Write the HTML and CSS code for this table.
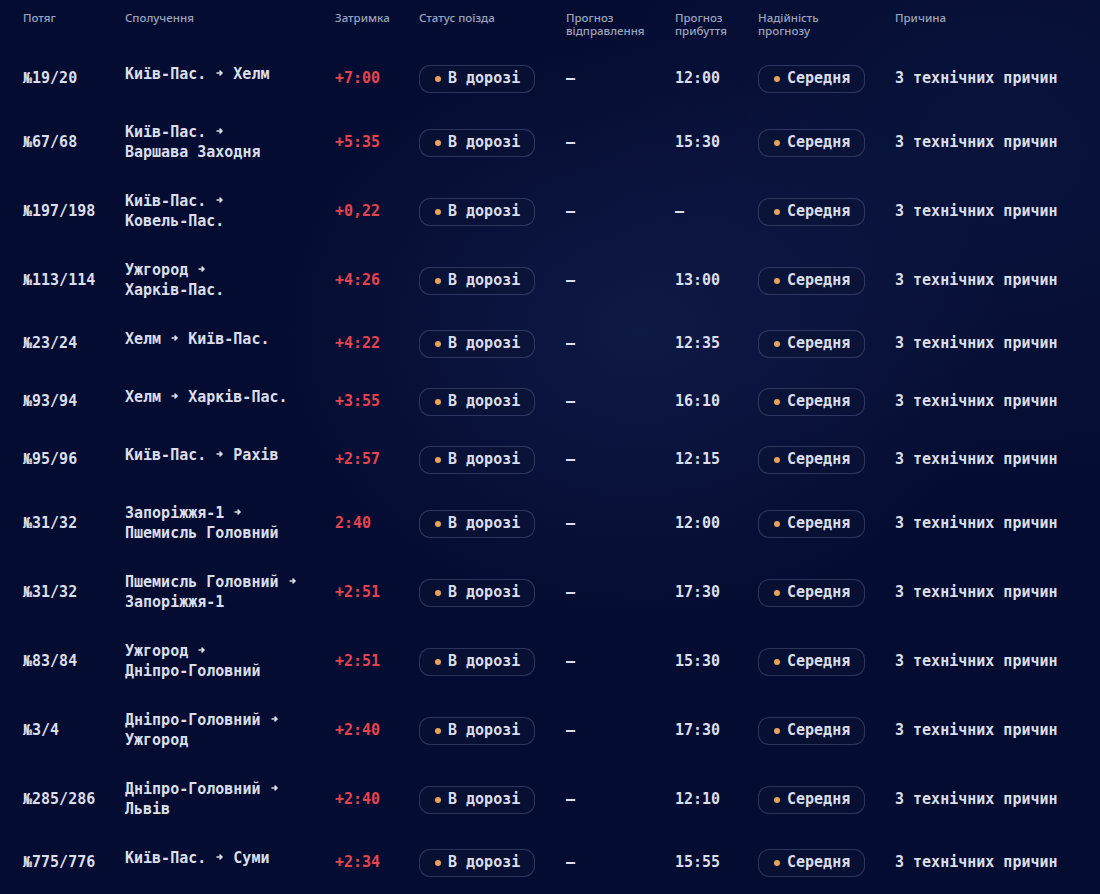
FILE: index.html
```html
<!DOCTYPE html>
<html lang="uk">
<head>
<meta charset="utf-8">
<title>Затримки поїздів</title>
<link rel="stylesheet" href="styles.css">
</head>
<body>
<div class="board">
  <div class="row head">
    <div>Потяг</div>
    <div>Сполучення</div>
    <div>Затримка</div>
    <div>Статус поїзда</div>
    <div>Прогноз<br>відправлення</div>
    <div>Прогноз<br>прибуття</div>
    <div>Надійність<br>прогнозу</div>
    <div>Причина</div>
  </div>

  <div class="row"><div class="num">№19/20</div><div class="route">Київ-Пас. <span class="arr"><svg viewBox="0 0 9 10" width="9" height="10"><path d="M1.5 5h5M4.5 2.6 7 5 4.5 7.4" fill="none" stroke="currentColor" stroke-width="1.5"/></svg></span> Хелм</div><div class="delay">+7:00</div><div><span class="pill"><i class="dot"></i>В дорозі</span></div><div>—</div><div>12:00</div><div><span class="pill"><i class="dot"></i>Середня</span></div><div>З технічних причин</div></div>

  <div class="row"><div class="num">№67/68</div><div class="route">Київ-Пас. <span class="arr"><svg viewBox="0 0 9 10" width="9" height="10"><path d="M1.5 5h5M4.5 2.6 7 5 4.5 7.4" fill="none" stroke="currentColor" stroke-width="1.5"/></svg></span><br>Варшава Заходня</div><div class="delay">+5:35</div><div><span class="pill"><i class="dot"></i>В дорозі</span></div><div>—</div><div>15:30</div><div><span class="pill"><i class="dot"></i>Середня</span></div><div>З технічних причин</div></div>

  <div class="row"><div class="num">№197/198</div><div class="route">Київ-Пас. <span class="arr"><svg viewBox="0 0 9 10" width="9" height="10"><path d="M1.5 5h5M4.5 2.6 7 5 4.5 7.4" fill="none" stroke="currentColor" stroke-width="1.5"/></svg></span><br>Ковель-Пас.</div><div class="delay">+0,22</div><div><span class="pill"><i class="dot"></i>В дорозі</span></div><div>—</div><div>—</div><div><span class="pill"><i class="dot"></i>Середня</span></div><div>З технічних причин</div></div>

  <div class="row"><div class="num">№113/114</div><div class="route">Ужгород <span class="arr"><svg viewBox="0 0 9 10" width="9" height="10"><path d="M1.5 5h5M4.5 2.6 7 5 4.5 7.4" fill="none" stroke="currentColor" stroke-width="1.5"/></svg></span><br>Харків-Пас.</div><div class="delay">+4:26</div><div><span class="pill"><i class="dot"></i>В дорозі</span></div><div>—</div><div>13:00</div><div><span class="pill"><i class="dot"></i>Середня</span></div><div>З технічних причин</div></div>

  <div class="row"><div class="num">№23/24</div><div class="route">Хелм <span class="arr"><svg viewBox="0 0 9 10" width="9" height="10"><path d="M1.5 5h5M4.5 2.6 7 5 4.5 7.4" fill="none" stroke="currentColor" stroke-width="1.5"/></svg></span> Київ-Пас.</div><div class="delay">+4:22</div><div><span class="pill"><i class="dot"></i>В дорозі</span></div><div>—</div><div>12:35</div><div><span class="pill"><i class="dot"></i>Середня</span></div><div>З технічних причин</div></div>

  <div class="row"><div class="num">№93/94</div><div class="route">Хелм <span class="arr"><svg viewBox="0 0 9 10" width="9" height="10"><path d="M1.5 5h5M4.5 2.6 7 5 4.5 7.4" fill="none" stroke="currentColor" stroke-width="1.5"/></svg></span> Харків-Пас.</div><div class="delay">+3:55</div><div><span class="pill"><i class="dot"></i>В дорозі</span></div><div>—</div><div>16:10</div><div><span class="pill"><i class="dot"></i>Середня</span></div><div>З технічних причин</div></div>

  <div class="row"><div class="num">№95/96</div><div class="route">Київ-Пас. <span class="arr"><svg viewBox="0 0 9 10" width="9" height="10"><path d="M1.5 5h5M4.5 2.6 7 5 4.5 7.4" fill="none" stroke="currentColor" stroke-width="1.5"/></svg></span> Рахів</div><div class="delay">+2:57</div><div><span class="pill"><i class="dot"></i>В дорозі</span></div><div>—</div><div>12:15</div><div><span class="pill"><i class="dot"></i>Середня</span></div><div>З технічних причин</div></div>

  <div class="row"><div class="num">№31/32</div><div class="route">Запоріжжя-1 <span class="arr"><svg viewBox="0 0 9 10" width="9" height="10"><path d="M1.5 5h5M4.5 2.6 7 5 4.5 7.4" fill="none" stroke="currentColor" stroke-width="1.5"/></svg></span><br>Пшемисль Головний</div><div class="delay">2:40</div><div><span class="pill"><i class="dot"></i>В дорозі</span></div><div>—</div><div>12:00</div><div><span class="pill"><i class="dot"></i>Середня</span></div><div>З технічних причин</div></div>

  <div class="row"><div class="num">№31/32</div><div class="route">Пшемисль Головний <span class="arr"><svg viewBox="0 0 9 10" width="9" height="10"><path d="M1.5 5h5M4.5 2.6 7 5 4.5 7.4" fill="none" stroke="currentColor" stroke-width="1.5"/></svg></span><br>Запоріжжя-1</div><div class="delay">+2:51</div><div><span class="pill"><i class="dot"></i>В дорозі</span></div><div>—</div><div>17:30</div><div><span class="pill"><i class="dot"></i>Середня</span></div><div>З технічних причин</div></div>

  <div class="row"><div class="num">№83/84</div><div class="route">Ужгород <span class="arr"><svg viewBox="0 0 9 10" width="9" height="10"><path d="M1.5 5h5M4.5 2.6 7 5 4.5 7.4" fill="none" stroke="currentColor" stroke-width="1.5"/></svg></span><br>Дніпро-Головний</div><div class="delay">+2:51</div><div><span class="pill"><i class="dot"></i>В дорозі</span></div><div>—</div><div>15:30</div><div><span class="pill"><i class="dot"></i>Середня</span></div><div>З технічних причин</div></div>

  <div class="row"><div class="num">№3/4</div><div class="route">Дніпро-Головний <span class="arr"><svg viewBox="0 0 9 10" width="9" height="10"><path d="M1.5 5h5M4.5 2.6 7 5 4.5 7.4" fill="none" stroke="currentColor" stroke-width="1.5"/></svg></span><br>Ужгород</div><div class="delay">+2:40</div><div><span class="pill"><i class="dot"></i>В дорозі</span></div><div>—</div><div>17:30</div><div><span class="pill"><i class="dot"></i>Середня</span></div><div>З технічних причин</div></div>

  <div class="row"><div class="num">№285/286</div><div class="route">Дніпро-Головний <span class="arr"><svg viewBox="0 0 9 10" width="9" height="10"><path d="M1.5 5h5M4.5 2.6 7 5 4.5 7.4" fill="none" stroke="currentColor" stroke-width="1.5"/></svg></span><br>Львів</div><div class="delay">+2:40</div><div><span class="pill"><i class="dot"></i>В дорозі</span></div><div>—</div><div>12:10</div><div><span class="pill"><i class="dot"></i>Середня</span></div><div>З технічних причин</div></div>

  <div class="row"><div class="num">№775/776</div><div class="route">Київ-Пас. <span class="arr"><svg viewBox="0 0 9 10" width="9" height="10"><path d="M1.5 5h5M4.5 2.6 7 5 4.5 7.4" fill="none" stroke="currentColor" stroke-width="1.5"/></svg></span> Суми</div><div class="delay">+2:34</div><div><span class="pill"><i class="dot"></i>В дорозі</span></div><div>—</div><div>15:55</div><div><span class="pill"><i class="dot"></i>Середня</span></div><div>З технічних причин</div></div>
</div>
</body>
</html>
```

FILE: styles.css
```css
html, body {
  margin: 0;
  padding: 0;
  height: 100%;
}

body {
  background-color: #040c31;
  background-image:
    radial-gradient(ellipse 520px 420px at 640px 330px, rgba(28, 40, 92, 0.45), rgba(28, 40, 92, 0) 70%),
    radial-gradient(ellipse 600px 500px at 1000px 150px, rgba(20, 32, 80, 0.35), rgba(20, 32, 80, 0) 70%);
  color: #dadeeb;
  font-family: "DejaVu Sans Mono", "Liberation Mono", monospace;
  font-size: 15px;
  overflow: hidden;
}

.board {
  padding: 2px 0 0 23px;
}

.row {
  display: grid;
  grid-template-columns: 102px 210px 84px 147px 109px 83px 137px 1fr;
  align-items: center;
  padding: 15px 0;
  line-height: 19.5px;
  font-weight: bold;
  white-space: nowrap;
}

.row.head {
  align-items: start;
  padding: 9px 0 13px;
  font-family: "Noto Sans", "Open Sans", sans-serif;
  font-size: 11.5px;
  line-height: 13px;
  font-weight: 500;
  color: #9ca4bd;
}

.route {
  align-self: start;
}

.arr {
  display: inline-block;
  width: 9px;
  height: 10px;
  vertical-align: 1px;
}

.arr svg {
  display: block;
}

.delay {
  color: #e5434f;
}

.pill {
  display: inline-flex;
  align-items: center;
  height: 28px;
  box-sizing: border-box;
  padding: 0 14px 0 15px;
  border: 1px solid rgba(140, 155, 205, 0.28);
  border-radius: 11px;
  background: rgba(10, 18, 52, 0.5);
}

.dot {
  width: 6px;
  height: 6px;
  border-radius: 50%;
  background: #e9a25b;
  margin-right: 7px;
}
```
